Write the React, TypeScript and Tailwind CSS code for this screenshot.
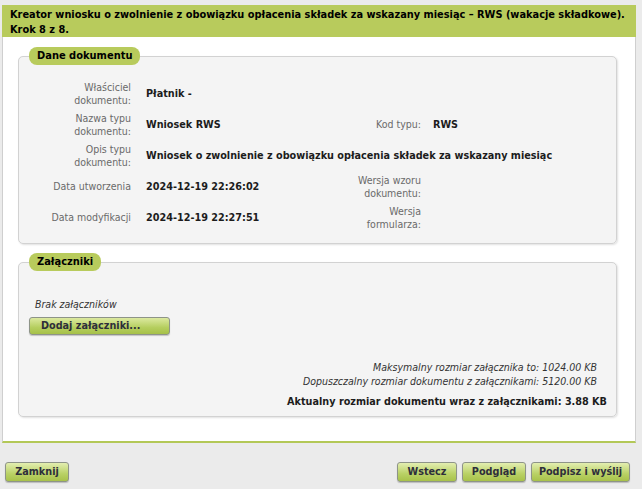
const btn =
  "h-[20px] rounded-[3px] border border-[#8e9488] bg-[linear-gradient(#e3eeb0,#b9d165_60%,#a8c24a)] text-[10.75px] font-bold leading-[18px] text-[#2e2e3a] shadow-[0_1px_1px_rgba(0,0,0,0.2)]";

function Label({ children }: { children: React.ReactNode }) {
  return <div className="text-right leading-[13px] text-[#6a6a6a]">{children}</div>;
}

function Value({ children, wide = false, pl = "pl-[15px]" }: { children?: React.ReactNode; wide?: boolean; pl?: string }) {
  return <div className={`${pl} text-[10.75px] font-bold leading-[13px] text-[#1c1c1c] ${wide ? "col-span-3" : ""}`}>{children}</div>;
}

export default function App() {
  return (
    <div className="relative h-[489px] w-[642px] overflow-hidden bg-[#ebebeb] pt-[5px] font-['DejaVu_Sans_Condensed','DejaVu_Sans',sans-serif] text-[10.5px] text-[#1c1c1c]">
      <div className="ml-[2px] w-[634px]">
        <div className="h-[32px] bg-[#b8cb5c] px-[8px] pt-[2px] text-[10.9px] font-bold leading-[15px] text-black">
          <div className="whitespace-nowrap">
            Kreator wniosku o zwolnienie z obowiązku opłacenia składek za wskazany miesiąc – RWS (wakacje składkowe).
          </div>
          <div>Krok 8 z 8.</div>
        </div>
        <div className="h-[406px] border-x border-b-2 border-x-[#cfcfcf] border-b-[#b3c857] bg-white pl-[15px] pt-[10px]">
          <fieldset className="w-[599px] rounded-[5px] border border-[#d2d2d2] bg-[#f4f4f4] pb-[10px] pt-[13px] shadow-[1px_1px_2px_rgba(0,0,0,0.12)]">
            <legend className="ml-[10px] h-[18px] rounded-[8px] bg-[#b8cb5c] px-[8px] text-[11px] font-bold leading-[18px] text-black">
              Dane dokumentu
            </legend>
            <div className="grid auto-rows-[31px] grid-cols-[112px_177px_113px_1fr] items-center">
              <Label>
                Właściciel
                <br />
                dokumentu:
              </Label>
              <Value>Płatnik -</Value>
              <div />
              <div />

              <Label>
                Nazwa typu
                <br />
                dokumentu:
              </Label>
              <Value>Wniosek RWS</Value>
              <Label>Kod typu:</Label>
              <Value pl="pl-[12px]">RWS</Value>

              <Label>
                Opis typu
                <br />
                dokumentu:
              </Label>
              <Value wide>Wniosek o zwolnienie z obowiązku opłacenia składek za wskazany miesiąc</Value>

              <Label>Data utworzenia</Label>
              <Value>2024-12-19 22:26:02</Value>
              <Label>
                Wersja wzoru
                <br />
                dokumentu:
              </Label>
              <Value pl="pl-[12px]" />

              <Label>Data modyfikacji</Label>
              <Value>2024-12-19 22:27:51</Value>
              <Label>
                Wersja
                <br />
                formularza:
              </Label>
              <Value pl="pl-[12px]" />
            </div>
          </fieldset>

          <fieldset className="mt-[9px] w-[599px] rounded-[5px] border border-[#d2d2d2] bg-[#f4f4f4] pb-[7px] pl-[10px] pr-[9px] pt-[26px] shadow-[1px_1px_2px_rgba(0,0,0,0.12)]">
            <legend className="ml-[0px] h-[18px] rounded-[8px] bg-[#b8cb5c] px-[8px] text-[11px] font-bold leading-[18px] text-black">
              Załączniki
            </legend>
            <div className="pl-[6px] italic leading-[14px] text-[#333]">Brak załączników</div>
            <button className="mt-[6px] block h-[18px] w-[141px] rounded-[3px] border border-[#8e9488] bg-[linear-gradient(#dce9a0,#b5ce5e_60%,#a6c148)] pl-[11px] text-left text-[10.75px] font-bold leading-[16px] text-[#2e2e3a] shadow-[0_1px_1px_rgba(0,0,0,0.2)]">
              Dodaj załączniki...
            </button>
            <div className="mt-[25px] text-right">
              <div className="pr-[10px] italic leading-[14px] text-[#333]">
                Maksymalny rozmiar załącznika to: 1024.00 KB
              </div>
              <div className="pr-[10px] italic leading-[14px] text-[#333]">
                Dopuszczalny rozmiar dokumentu z załącznikami: 5120.00 KB
              </div>
              <div className="mt-[7px] text-[10.75px] font-bold leading-[14px] text-[#1c1c1c]">
                Aktualny rozmiar dokumentu wraz z załącznikami: 3.88 KB
              </div>
            </div>
          </fieldset>
        </div>
      </div>
      <div className="mt-[19px] flex justify-between pl-[5px] pr-[12px]">
        <button className={`${btn} w-[64px]`}>Zamknij</button>
        <div className="flex gap-[5px]">
          <button className={`${btn} w-[60px]`}>Wstecz</button>
          <button className={`${btn} w-[64px]`}>Podgląd</button>
          <button className={`${btn} w-[99px]`}>Podpisz i wyślij</button>
        </div>
      </div>
    </div>
  );
}
